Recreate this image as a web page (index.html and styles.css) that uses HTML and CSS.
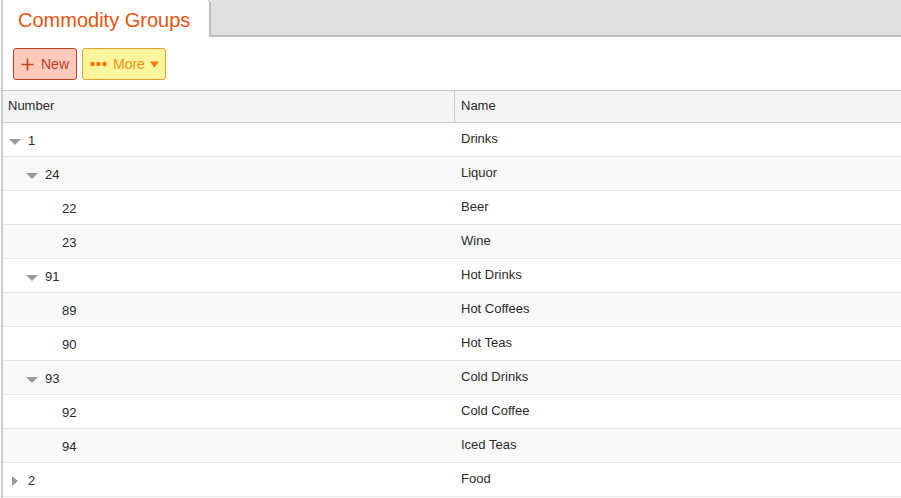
FILE: index.html
```html
<!DOCTYPE html>
<html>
<head>
<meta charset="utf-8">
<link rel="stylesheet" href="styles.css">
</head>
<body>
<div class="frame">
  <div class="tabstrip">
    <div class="tab">Commodity Groups</div>
    <div class="tabfill"></div>
  </div>
  <div class="toolbar">
    <button class="btn btn-new">
      <svg width="13" height="13" viewBox="0 0 13 13"><path d="M6.5 0.5V12.5M0.5 6.5H12.5" stroke="#c8401a" stroke-width="1.6" fill="none"/></svg>
      <span>New</span>
    </button>
    <button class="btn btn-more">
      <svg width="17" height="6" viewBox="0 0 17 6"><circle cx="2.5" cy="3" r="2.3" fill="#f07800"/><circle cx="8.5" cy="3" r="2.3" fill="#f07800"/><circle cx="14.5" cy="3" r="2.3" fill="#f07800"/></svg>
      <span>More</span>
      <svg width="9" height="7" viewBox="0 0 9 7"><path d="M0 0.5H9L4.5 6.5Z" fill="#f07800"/></svg>
    </button>
  </div>
  <div class="grid">
    <div class="row head">
      <div class="c1">Number</div>
      <div class="c2">Name</div>
    </div>
    <div class="row">
      <div class="c1"><span class="exp down"></span><span>1</span></div>
      <div class="c2">Drinks</div>
    </div>
    <div class="row alt">
      <div class="c1"><span class="ind"></span><span class="exp down"></span><span>24</span></div>
      <div class="c2">Liquor</div>
    </div>
    <div class="row">
      <div class="c1"><span class="ind"></span><span class="ind"></span><span class="exp"></span><span>22</span></div>
      <div class="c2">Beer</div>
    </div>
    <div class="row alt">
      <div class="c1"><span class="ind"></span><span class="ind"></span><span class="exp"></span><span>23</span></div>
      <div class="c2">Wine</div>
    </div>
    <div class="row">
      <div class="c1"><span class="ind"></span><span class="exp down"></span><span>91</span></div>
      <div class="c2">Hot Drinks</div>
    </div>
    <div class="row alt">
      <div class="c1"><span class="ind"></span><span class="ind"></span><span class="exp"></span><span>89</span></div>
      <div class="c2">Hot Coffees</div>
    </div>
    <div class="row">
      <div class="c1"><span class="ind"></span><span class="ind"></span><span class="exp"></span><span>90</span></div>
      <div class="c2">Hot Teas</div>
    </div>
    <div class="row alt">
      <div class="c1"><span class="ind"></span><span class="exp down"></span><span>93</span></div>
      <div class="c2">Cold Drinks</div>
    </div>
    <div class="row">
      <div class="c1"><span class="ind"></span><span class="ind"></span><span class="exp"></span><span>92</span></div>
      <div class="c2">Cold Coffee</div>
    </div>
    <div class="row alt">
      <div class="c1"><span class="ind"></span><span class="ind"></span><span class="exp"></span><span>94</span></div>
      <div class="c2">Iced Teas</div>
    </div>
    <div class="row">
      <div class="c1"><span class="exp right"></span><span>2</span></div>
      <div class="c2">Food</div>
    </div>
  </div>
</div>
</body>
</html>
```

FILE: styles.css
```css
html, body {
  margin: 0;
  padding: 0;
  background: #fff;
  overflow: hidden;
}
body {
  font-family: "Liberation Sans", Arial, sans-serif;
  color: #2a2a2a;
  font-size: 13px;
}
.frame {
  margin-left: 1px;
  border-left: 2px solid #cccccc;
  height: 498px;
}
.tabstrip {
  display: flex;
  height: 37px;
}
.tab {
  width: 208px;
  padding-left: 15px;
  border-right: 2px solid #bdbdbd;
  border-top-left-radius: 4px;
  border-top-right-radius: 3px;
  background: #fff;
  color: #e8540c;
  font-size: 20px;
  line-height: 40px;
  height: 37px;
  box-sizing: border-box;
}
.tabfill {
  flex: 1;
  background: #dfdfdf;
  border-bottom: 2px solid #bdbdbd;
  box-sizing: border-box;
}
.toolbar {
  display: flex;
  gap: 5px;
  padding: 11px 0 0 10px;
  height: 53px;
  box-sizing: border-box;
}
.btn {
  height: 32px;
  border-radius: 3px;
  font-family: "Liberation Sans", Arial, sans-serif;
  font-size: 14px;
  display: flex;
  align-items: center;
  padding: 0;
  box-sizing: border-box;
}
.btn-new {
  width: 64px;
  background: #ffcabb;
  border: 1px solid #c8401a;
  color: #c0391b;
  padding-left: 7px;
  gap: 7px;
}
.btn-more {
  width: 84px;
  background: #fff59d;
  border: 1px solid #f0a030;
  color: #f39012;
  padding-left: 7px;
  gap: 6px;
}
.btn-more svg:last-child {
  margin-left: -1px;
}
.grid {
  border-top: 1px solid #c4c4c4;
}
.row {
  display: flex;
  height: 34px;
  border-bottom: 1px solid #e6e6e6;
  box-sizing: border-box;
  align-items: center;
  background: #fff;
}
.row.alt {
  background: #f9f9f9;
}
.c1 {
  width: 452px;
  box-sizing: border-box;
  padding-left: 6px;
  padding-top: 2px;
  display: flex;
  align-items: center;
}
.c2 {
  flex: 1;
  padding-left: 6px;
  margin-top: -3px;
}
.row.head {
  height: 32px;
  background: #f4f4f4;
  border-bottom: 1px solid #cccccc;
  align-items: stretch;
}
.row.head .c1, .row.head .c2 {
  display: flex;
  align-items: center;
  padding-top: 0;
  padding-bottom: 3px;
  margin-top: 0;
}
.row.head .c1 {
  padding-left: 5px;
  border-right: 1px solid #cccccc;
}
.ind {
  width: 17px;
  flex: none;
}
.exp {
  width: 12px;
  height: 12px;
  margin-right: 7px;
  flex: none;
  position: relative;
}
.exp.down::before {
  content: "";
  position: absolute;
  left: 0;
  top: 4px;
  border-left: 6px solid transparent;
  border-right: 6px solid transparent;
  border-top: 6px solid #9a9a9a;
}
.exp.right::before {
  content: "";
  position: absolute;
  left: 3px;
  top: 1px;
  border-top: 5.5px solid transparent;
  border-bottom: 5.5px solid transparent;
  border-left: 6px solid #9a9a9a;
}
```
